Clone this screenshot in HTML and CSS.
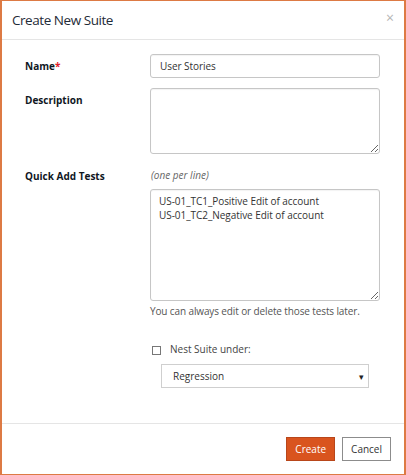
FILE: index.html
```html
<!DOCTYPE html>
<html lang="en">
<head>
<meta charset="utf-8">
<title>Create New Suite</title>
<link rel="stylesheet" href="styles.css">
</head>
<body>
<div class="modal">
  <div class="modal-header">
    <h1 class="modal-title">Create New Suite</h1>
    <span class="close">&times;</span>
  </div>
  <div class="modal-body">
    <div class="row row-name">
      <label class="label">Name<span class="req">*</span></label>
      <div class="field">
        <input class="input" type="text" value="User Stories">
      </div>
    </div>
    <div class="row row-desc">
      <label class="label">Description</label>
      <div class="field">
        <textarea class="input textarea desc"></textarea>
      </div>
    </div>
    <div class="row row-quick">
      <label class="label">Quick Add Tests</label>
      <div class="field">
        <div class="hint">(one per line)</div>
        <textarea class="input textarea tests">US-01_TC1_Positive Edit of account
US-01_TC2_Negative Edit of account</textarea>
        <div class="help">You can always edit or delete those tests later.</div>
      </div>
    </div>
    <div class="row row-nest">
      <div class="label"></div>
      <div class="field">
        <label class="check"><span class="box"></span>Nest Suite under:</label>
        <div class="select"><span>Regression</span><span class="caret">&#9662;</span></div>
      </div>
    </div>
  </div>
  <div class="modal-footer">
    <button class="btn btn-primary">Create</button>
    <button class="btn btn-default">Cancel</button>
  </div>
</div>
</body>
</html>
```
FILE: styles.css
```css
html, body {
  margin: 0;
  padding: 0;
  background: #fff;
}
body {
  font-family: "Open Sans", "Noto Sans", sans-serif;
  color: #333;
}
.modal {
  box-sizing: border-box;
  width: 406px;
  height: 475px;
  border: 1px solid #dd7a44;
  border-left-width: 2px;
  border-right-width: 2px;
  display: flex;
  flex-direction: column;
}
.modal-header {
  height: 38px;
  border-bottom: 1px solid #e5e5e5;
  display: flex;
  align-items: center;
  justify-content: space-between;
  padding: 0 10px 0 10px;
  flex: none;
}
.modal-title {
  margin: 0;
  font-size: 13.5px;
  letter-spacing: -0.45px;
  font-weight: 400;
  color: #1f2b38;
  line-height: 20px;
  margin-top: -1px;
}
.close {
  font-size: 14px;
  color: #b5b5b5;
  line-height: 14px;
  margin-top: -4px;
}
.modal-body {
  flex: 1;
  padding: 14px 0 0 23px;
}
.row {
  display: flex;
}
.label {
  width: 125px;
  flex: none;
  font-size: 10px;
  line-height: 14px;
  font-weight: 700;
  color: #10171f;
}
.req {
  color: #e0202a;
}
.field {
  width: 230px;
  flex: none;
}
.input {
  box-sizing: border-box;
  display: block;
  width: 230px;
  margin: 0;
  font-family: "Open Sans", "Noto Sans", sans-serif;
  font-size: 10px;
  letter-spacing: -0.05px;
  color: #333;
  border: 1px solid #c6c6c6;
  border-radius: 3px;
  background: #fff;
  box-shadow: inset 0 1px 1px rgba(0,0,0,0.05);
}
input.input {
  height: 24px;
  padding: 0 9px;
}
.row-name .label {
  padding-top: 5px;
}
.row-desc {
  margin-top: 10px;
}
.row-desc .label {
  padding-top: 5px;
}
.textarea {
  padding: 4px 8px;
  line-height: 14px;
  resize: vertical;
}
.desc {
  height: 66px;
}
.row-quick {
  margin-top: 14px;
}
.row-quick .label {
  padding-top: 1px;
}
.hint {
  font-size: 10px;
  font-style: italic;
  color: #666;
  line-height: 14px;
  padding-left: 1px;
}
.tests {
  margin-top: 7px;
  height: 112px;
}
.help {
  font-size: 10px;
  letter-spacing: -0.12px;
  color: #555;
  line-height: 14px;
  margin-top: 3px;
}
.row-nest {
  margin-top: 24px;
}
.check {
  display: flex;
  align-items: center;
  font-size: 10px;
  color: #444;
  line-height: 14px;
  padding-left: 2px;
}
.box {
  box-sizing: border-box;
  width: 9px;
  height: 9px;
  border: 1px solid #777;
  margin-right: 9px;
  margin-top: 3px;
}
.select {
  box-sizing: border-box;
  margin: 8px 0 0 11px;
  width: 208px;
  height: 24px;
  border: 1px solid #cfcfcf;
  display: flex;
  align-items: center;
  justify-content: space-between;
  padding: 0 4px 0 11px;
  font-size: 10px;
  color: #333;
}
.caret {
  font-size: 9px;
  color: #222;
}
.modal-footer {
  flex: none;
  height: 50px;
  border-top: 1px solid #e5e5e5;
  display: flex;
  justify-content: flex-end;
  align-items: center;
  padding-right: 13px;
  gap: 7px;
}
.btn {
  box-sizing: border-box;
  height: 24px;
  font-family: "Open Sans", "Noto Sans", sans-serif;
  font-size: 10px;
  padding: 0 8px;
  border-radius: 0;
  margin: 0;
}
.btn-primary {
  background: #d9541e;
  border: 1px solid #b8461a;
  color: #fff;
}
.btn-default {
  background: #fff;
  border: 1px solid #8c8c8c;
  color: #333;
}
```
